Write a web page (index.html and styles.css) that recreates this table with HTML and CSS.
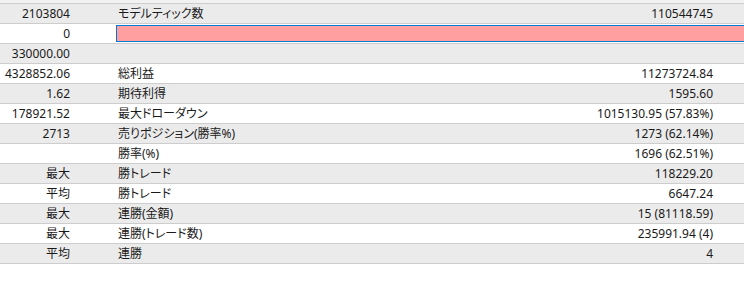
FILE: index.html
```html
<!DOCTYPE html>
<html lang="ja">
<head>
<meta charset="utf-8">
<link rel="stylesheet" href="styles.css">
</head>
<body>
<div class="strip"></div>
<div class="table">
  <div class="row alt"><span class="c1">2103804</span><span class="c2">モデルティック数</span><span class="c3">110544745</span></div>
  <div class="row"><span class="c1">0</span><span class="field"></span></div>
  <div class="row alt"><span class="c1">330000.00</span><span class="c2"></span><span class="c3"></span></div>
  <div class="row"><span class="c1">4328852.06</span><span class="c2">総利益</span><span class="c3">11273724.84</span></div>
  <div class="row alt"><span class="c1">1.62</span><span class="c2">期待利得</span><span class="c3">1595.60</span></div>
  <div class="row"><span class="c1">178921.52</span><span class="c2">最大ドローダウン</span><span class="c3">1015130.95 (57.83%)</span></div>
  <div class="row alt"><span class="c1">2713</span><span class="c2">売りポジション(勝率%)</span><span class="c3">1273 (62.14%)</span></div>
  <div class="row"><span class="c1"></span><span class="c2">勝率(%)</span><span class="c3">1696 (62.51%)</span></div>
  <div class="row alt"><span class="c1">最大</span><span class="c2">勝トレード</span><span class="c3">118229.20</span></div>
  <div class="row"><span class="c1">平均</span><span class="c2">勝トレード</span><span class="c3">6647.24</span></div>
  <div class="row alt"><span class="c1">最大</span><span class="c2">連勝(金額)</span><span class="c3">15 (81118.59)</span></div>
  <div class="row"><span class="c1">最大</span><span class="c2">連勝(トレード数)</span><span class="c3">235991.94 (4)</span></div>
  <div class="row alt"><span class="c1">平均</span><span class="c2">連勝</span><span class="c3">4</span></div>
</div>
</body>
</html>
```
FILE: styles.css
```css
html, body {
  margin: 0;
  padding: 0;
  background: #ffffff;
}
body {
  width: 744px;
  height: 284px;
  overflow: hidden;
  font-family: "Noto Sans", "Noto Sans CJK JP", sans-serif;
  font-size: 12px;
  color: #1a1a1a;
  font-feature-settings: "palt";
}
.strip {
  height: 3px;
  background: #f2f2f2;
}
.table {
  border-top: 1px solid #cdcdcd;
}
.row {
  display: grid;
  grid-template-columns: 70px 46px auto 1fr;
  height: 19px;
  line-height: 19px;
  border-bottom: 1px solid #cdcdcd;
  background: #ffffff;
  white-space: nowrap;
}
.row.alt {
  background: #ebebeb;
}
.c1 {
  grid-column: 1;
  text-align: right;
}
.c2 {
  grid-column: 3;
  padding-left: 2px;
}
.c3 {
  grid-column: 4;
  text-align: right;
  padding-right: 31px;
}
.field {
  grid-column: 3 / 5;
  margin: 1px 0;
  height: 15px;
  background: #ff9f9f;
  border: 1px solid #0078d7;
  border-right: none;
}
```
